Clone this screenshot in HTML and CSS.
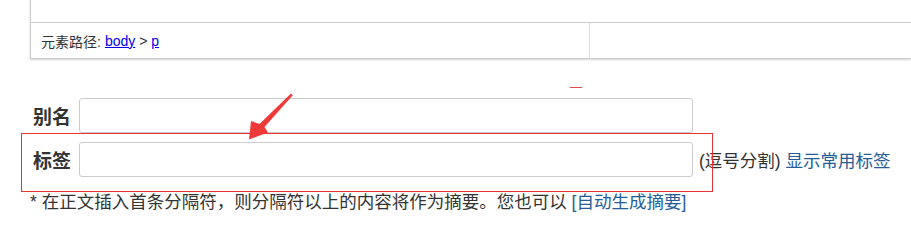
FILE: index.html
```html
<!DOCTYPE html>
<html lang="zh-CN">
<head>
<meta charset="utf-8">
<title>标签</title>
<link rel="stylesheet" href="styles.css">
</head>
<body>
<div class="editor">
  <div class="editor-top"></div>
  <div class="status">
    <div class="path">元素路径: <a href="#">body</a>&nbsp;&gt;&nbsp;<a href="#">p</a></div>
    <div class="words"></div>
  </div>
</div>
<div class="form">
  <div class="row">
    <label class="label">别名</label>
    <input class="field" type="text">
  </div>
  <div class="row">
    <label class="label">标签</label>
    <input class="field" type="text">
    <span class="hint">(逗号分割) <a class="blue" href="#">显示常用标签</a></span>
  </div>
  <p class="note">* 在正文插入首条分隔符，则分隔符以上的内容将作为摘要。您也可以 <a class="blue" href="#">[自动生成摘要]</a></p>
</div>
<div class="dash"></div>
<div class="highlight"></div>
<svg class="arrow" width="911" height="250" viewBox="0 0 911 250" aria-hidden="true">
  <polygon points="291,93.5 292.8,95.3 264.5,127 268,132.5 249,139.5 251,121 259.5,124" fill="#f03a3a"/>
</svg>
</body>
</html>
```

FILE: styles.css
```css
html, body {
  margin: 0;
  padding: 0;
}
body {
  width: 911px;
  height: 250px;
  overflow: hidden;
  position: relative;
  background: #fff;
  color: #333;
  font-family: "Liberation Sans", "Noto Sans CJK SC", sans-serif;
}
a { color: #0000ee; }
.editor {
  margin-left: 30px;
  border-left: 1px solid #cccccc;
  box-shadow: 0 1px 2px rgba(0, 0, 0, 0.18);
}
.editor-top {
  height: 22px;
}
.status {
  display: flex;
  height: 35px;
  border-top: 1px solid #cccccc;
  border-bottom: 1px solid #cccccc;
}
.path {
  box-sizing: border-box;
  width: 559px;
  padding-left: 10px;
  border-right: 1px solid #dddddd;
  font-size: 14px;
  display: flex;
  align-items: center;
}
.path a { margin-left: 4px; }
.path a + a { margin-left: 0; }
.words { flex: 1; }
.form {
  margin-top: 39px;
  padding-left: 30px;
}
.row {
  display: flex;
  align-items: center;
  height: 34px;
  margin-bottom: 10px;
}
.label {
  box-sizing: border-box;
  width: 49px;
  padding-left: 3px;
  font-size: 19px;
  font-weight: bold;
  color: #333;
}
.field {
  box-sizing: border-box;
  width: 614px;
  height: 35px;
  margin: 0;
  border: 1px solid #cccccc;
  border-radius: 3px;
  background: #fff;
}
.hint {
  margin-left: 6px;
  font-size: 17.5px;
  white-space: nowrap;
  color: #333;
}
.blue {
  color: #245d98;
  text-decoration: none;
}
.note {
  margin: 14px 0 0;
  font-size: 17.5px;
  line-height: 24px;
  white-space: nowrap;
}
.dash {
  position: absolute;
  left: 570px;
  top: 87px;
  width: 12px;
  height: 1px;
  background: #e84a4a;
}
.highlight {
  position: absolute;
  left: 21px;
  top: 133px;
  width: 692px;
  height: 59px;
  box-sizing: border-box;
  border: 1px solid #ea3434;
}
.arrow {
  position: absolute;
  left: 0;
  top: 0;
}
```
